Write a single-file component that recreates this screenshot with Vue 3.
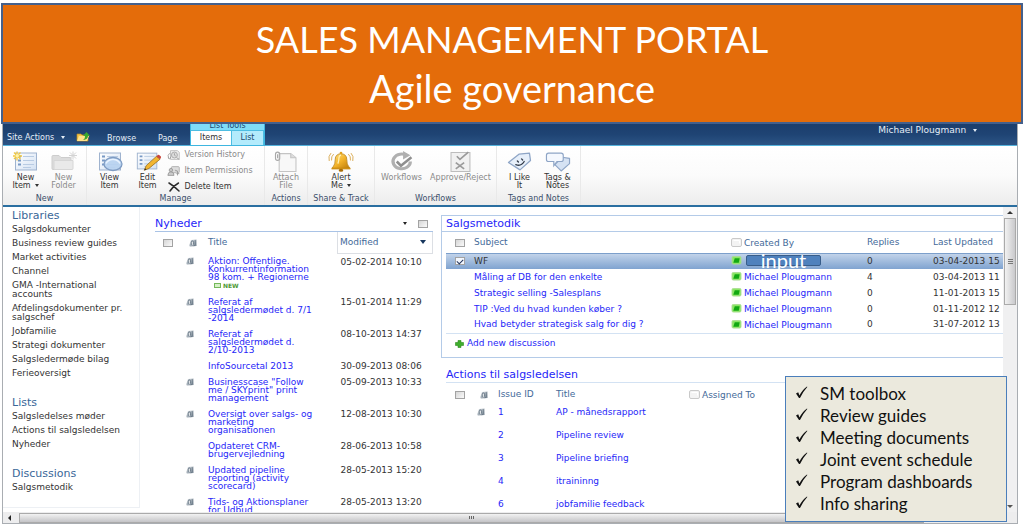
<script setup>
import { ref } from 'vue'

const sections = [
  {
    title: 'Libraries',
    items: ['Salgsdokumenter', 'Business review guides', 'Market activities', 'Channel', 'GMA -International\naccounts', 'Afdelingsdokumenter pr.\nsalgschef', 'Jobfamilie', 'Strategi dokumenter', 'Salgsledermøde bilag', 'Ferieoversigt'],
  },
  { title: 'Lists', items: ['Salgsledelses møder', 'Actions til salgsledelsen', 'Nyheder'] },
  { title: 'Discussions', items: ['Salgsmetodik'] },
]

const groups = [
  {
    name: 'New', cls: 'g-new',
    big: [
      { icon: 'new-item', label: 'New\nItem', caret: true },
      { icon: 'new-folder', label: 'New\nFolder', off: true },
    ],
  },
  {
    name: 'Manage', cls: 'g-manage',
    big: [
      { icon: 'view-item', label: 'View\nItem' },
      { icon: 'edit-item', label: 'Edit\nItem' },
    ],
    small: [
      { icon: 'history', label: 'Version History', off: true },
      { icon: 'permissions', label: 'Item Permissions', off: true },
      { icon: 'delete', label: 'Delete Item' },
    ],
  },
  { name: 'Actions', cls: 'g-actions', big: [{ icon: 'attach', label: 'Attach\nFile', off: true }] },
  { name: 'Share & Track', cls: 'g-share', big: [{ icon: 'bell', label: 'Alert\nMe', caret: true }] },
  {
    name: 'Workflows', cls: 'g-flow',
    big: [
      { icon: 'workflow', label: 'Workflows', off: true },
      { icon: 'approve', label: 'Approve/Reject', off: true },
    ],
  },
  {
    name: 'Tags and Notes', cls: 'g-tags',
    big: [
      { icon: 'like', label: 'I Like\nIt' },
      { icon: 'notes', label: 'Tags &\nNotes' },
    ],
  },
]

const news = [
  { title: 'Aktion: Offentlige.\nKonkurrentinformation\n98 kom. + Regionerne', date: '05-02-2014 10:10', clip: true, fresh: true },
  { title: 'Referat af\nsalgsledermødet d. 7/1\n-2014', date: '15-01-2014 11:29', clip: true },
  { title: 'Referat af\nsalgsledermødet d.\n2/10-2013', date: '08-10-2013 14:37', clip: true },
  { title: 'InfoSourcetal 2013', date: '30-09-2013 08:06' },
  { title: 'Businesscase "Follow\nme / SKYprint" print\nmanagement', date: '05-09-2013 10:33', clip: true },
  { title: 'Oversigt over salgs- og\nmarketing\norganisationen', date: '12-08-2013 10:30', clip: true },
  { title: 'Opdateret CRM-\nbrugervejledning', date: '28-06-2013 10:58' },
  { title: 'Updated pipeline\nreporting (activity\nscorecard)', date: '28-05-2013 15:20', clip: true },
  { title: 'Tids- og Aktionsplaner\nfor Udbud', date: '28-05-2013 13:20', clip: true },
]

const threads = [
  { subject: 'WF', replies: 0, updated: '03-04-2013 15', selected: true },
  { subject: 'Måling af DB for den enkelte', replies: 4, updated: '03-04-2013 11' },
  { subject: 'Strategic selling -Salesplans', replies: 0, updated: '11-01-2013 15' },
  { subject: 'TIP :Ved du hvad kunden køber ?', replies: 0, updated: '01-11-2012 12' },
  { subject: 'Hvad betyder strategisk salg for dig ?', replies: 0, updated: '31-07-2012 13' },
]

const issues = [
  { id: 1, title: 'AP - månedsrapport', clip: true },
  { id: 2, title: 'Pipeline review' },
  { id: 3, title: 'Pipeline briefing' },
  { id: 4, title: 'itraininng' },
  { id: 6, title: 'jobfamilie feedback' },
]

const features = ['SM toolbox', 'Review guides', 'Meeting documents', 'Joint event schedule', 'Program dashboards', 'Info sharing']

const wfChecked = ref(true)
</script>

<template>
  <div class="slide">
    <svg class="defs" aria-hidden="true">
      <defs>
        <linearGradient id="gold" x1="0" y1="0" x2="1" y2="1">
          <stop offset="0" stop-color="#ffe588" /><stop offset="0.5" stop-color="#f3b32a" /><stop offset="1" stop-color="#b97808" />
        </linearGradient>
        <linearGradient id="sheet" x1="0" y1="0" x2="1" y2="1">
          <stop offset="0" stop-color="#ffffff" /><stop offset="1" stop-color="#d3e1f3" />
        </linearGradient>
        <linearGradient id="steel" x1="0" y1="0" x2="1" y2="1">
          <stop offset="0" stop-color="#dfe4e8" /><stop offset="1" stop-color="#71808e" />
        </linearGradient>
        <symbol id="clip" viewBox="0 0 8 8">
          <path d="M2 1L7.500 0.500V7L1 7.500Q0 7.500 0.500 5.500z" fill="url(#steel)" />
          <path d="M2.300 6V3.200Q2.300 1.800 3.400 1.800T4.500 3.200V5.400M6.300 1.200V5.500Q6.300 6.800 4.600 6.800" fill="none" stroke="#62717f" stroke-width="0.700" />
          <path d="M3.400 3V5.800" stroke="#fff" stroke-width="0.700" />
        </symbol>
        <symbol id="list-sheet" viewBox="0 0 26 20">
          <rect x="2.500" y="1.500" width="21" height="17" fill="url(#sheet)" stroke="#9fb3cf" />
          <path d="M5 5h3M5 9h3M5 13h3" stroke="#7899c5" stroke-width="2" />
          <path d="M10 5h11M10 9h11M10 13h11M10 16h8" stroke="#b8cbe3" />
        </symbol>
        <symbol id="new-item" viewBox="0 0 26 20">
          <use href="#list-sheet" />
          <path d="M4 0v9M0 4.500h9M1 1l6.500 6.500M7.500 1L1 7.500" stroke="#f2c73c" stroke-width="1.300" />
          <circle cx="4.200" cy="4.300" r="1.800" fill="#fff3a8" />
        </symbol>
        <symbol id="new-folder" viewBox="0 0 26 20">
          <path d="M1 17V5q0-1 1-1h6l2 2h9q1 0 1 1v10q0 1-1 1H2q-1 0-1-1z" fill="#dcdcdc" stroke="#cdcdcd" />
          <path d="M3 18V9h19v8q0 1-1 1z" fill="#e9e9e9" stroke="#d6d6d6" />
          <path d="M22 0v8M18 4h8M19 1l6 6M25 1l-6 6" stroke="#d4d4d4" stroke-width="1" />
        </symbol>
        <symbol id="view-item" viewBox="0 0 26 20">
          <use href="#list-sheet" />
          <ellipse cx="16" cy="12.500" rx="9" ry="6.500" fill="#b7d1f0" fill-opacity="0.900" stroke="#7f9cc3" stroke-width="1.300" />
          <path d="M9 12q2-4 7-4t7 4" fill="none" stroke="#e9f3ff" stroke-width="1.500" />
        </symbol>
        <symbol id="edit-item" viewBox="0 0 28 21">
          <use href="#list-sheet" width="26" height="20" />
          <path d="M10 20l2-5L23 5l4 3L15 18z" fill="#f2b632" stroke="#94691a" stroke-width="0.800" />
          <path d="M23 5l1.500-1.500q1-0.500 2.500 0.700t1 2L27 8z" fill="#c9463c" />
          <path d="M10 20l0.800-2.300 1.600 1.300z" fill="#222" />
        </symbol>
        <symbol id="history" viewBox="0 0 16 12">
          <path d="M4 1h8l2 2v8H4z" fill="#eee" stroke="#bbb" />
          <circle cx="8.500" cy="6" r="3.400" fill="#ddd" stroke="#a5a5a5" />
          <path d="M2 10q-2-4 1-6M1 9l2 1.500L4.500 8M8.500 4v2.200l1.500 1M11 9l3 2" fill="none" stroke="#9b9b9b" />
        </symbol>
        <symbol id="permissions" viewBox="0 0 16 12">
          <rect x="5" y="1" width="9" height="7" rx="1" fill="#ddd" stroke="#aaa" />
          <circle cx="4.500" cy="5" r="2" fill="#c4c4c4" stroke="#999" />
          <path d="M1 11q0-4 3.500-4T8 11zM9 5l3 1v5M11 9h3" fill="#ccc" stroke="#999" />
        </symbol>
        <symbol id="delete" viewBox="0 0 12 10">
          <path d="M1 1q5 3 10 8M10.500 1Q5 4 2 9" fill="none" stroke="#2b2b2b" stroke-width="1.500" stroke-linecap="round" />
        </symbol>
        <symbol id="attach" viewBox="0 0 24 20">
          <path d="M5.500 2.500h11l5 4v13h-16z" fill="#f8f8f8" stroke="#c4c4c4" />
          <path d="M16.500 2.500v4h5" fill="#ddd" stroke="#c4c4c4" />
          <path d="M2 7V3q0-2 2-2t2 2v4q0 2-2 2t-2-2M4 3v4" fill="none" stroke="#a9a9a9" stroke-width="1.100" />
        </symbol>
        <symbol id="bell" viewBox="0 0 24 20">
          <path d="M4.500 15q2-2 2-7 0-5 5.500-5.500Q17.500 3 17.500 8q0 5 2 7l1 1.500h-17z" fill="url(#gold)" stroke="#b47c12" stroke-width="0.700" />
          <path d="M3 16h18v1.500H3z" fill="#cf8f14" />
          <ellipse cx="12" cy="18.300" rx="2.200" ry="1.500" fill="#a86d08" />
          <circle cx="12" cy="2" r="1.300" fill="#e0a01d" />
          <path d="M5 3Q2.500 5 3 9M2.500 2Q-0.500 5 0.800 9.500M19 3q2.500 2 2 6M21.500 2q3 3 1.700 7.500" fill="none" stroke="#d9a950" stroke-width="0.900" />
          <path d="M9 12q1-2 1-5t2-3" fill="none" stroke="#fff2b8" stroke-width="1.200" />
        </symbol>
        <symbol id="workflow" viewBox="0 0 24 20">
          <path d="M17 4.500A8.300 7 0 1 0 20 10" fill="none" stroke="#b0b0b0" stroke-width="3" />
          <path d="M13 0l7 4-7 4z" fill="#b0b0b0" />
          <path d="M7 10l4 4 10-8" fill="none" stroke="#8f8f8f" stroke-width="2.400" />
        </symbol>
        <symbol id="approve" viewBox="0 0 22 20">
          <path d="M1.500 1.500h18v18h-18z" fill="#f1f1f1" stroke="#bdbdbd" />
          <path d="M7 5l3 3 8-7M6 11l8 6M14 11l-8 6" fill="none" stroke="#9a9a9a" stroke-width="1.600" />
        </symbol>
        <symbol id="like" viewBox="0 0 24 20">
          <path d="M1 11L11 3l10-1 1 7-10 9z" fill="#e6effa" stroke="#8ea5c6" stroke-width="1.200" stroke-linejoin="round" />
          <path d="M8 13q5 2 8-3M9.500 9.500l1 1M13.500 7.500l1 1" fill="none" stroke="#333c4a" stroke-width="1.300" stroke-linecap="round" />
        </symbol>
        <symbol id="notes" viewBox="0 0 24 20">
          <path d="M9 13l7-7 7 1v5l-8 7z" fill="#d5e2f3" stroke="#8ea5c6" stroke-width="1.100" stroke-linejoin="round" />
          <path d="M3 2h12q2 0 2 2v4q0 2-2 2h-4l-3 4v-4H3q-2 0-2-2V4q0-2 2-2z" fill="#f4f8fe" stroke="#8ea5c6" stroke-width="1.100" />
        </symbol>
        <symbol id="person" viewBox="0 0 11 10">
          <rect x="0.500" y="0.500" width="10" height="8.500" rx="1.500" fill="#8be565" stroke="#a9dd92" />
          <path d="M2 7.500L3.500 2.500h5.500L8 7.500z" fill="#12a812" />
        </symbol>
        <symbol id="blank" viewBox="0 0 11 9">
          <rect x="0.500" y="0.500" width="10" height="8" rx="1.500" fill="#f3f3f3" stroke="#c9c9c9" />
          <path d="M2.500 2.500h6v3" fill="none" stroke="#fff" />
        </symbol>
        <symbol id="folder-up" viewBox="0 0 14 10">
          <path d="M1 9V2h4l1 1h6v6z" fill="#f4c64b" stroke="#b98a22" stroke-width="0.700" />
          <path d="M1 9l2-5h10l-2 5z" fill="#ffe28a" />
          <path d="M6 8q3 0 3-4H7l3.500-4L14 4h-2q0 4-6 4z" fill="#39a82f" />
        </symbol>
        <symbol id="tick" viewBox="0 0 13 14">
          <path d="M1 8.500l2.200-1.300 1.300 3.300Q7.500 4.500 12 1.500l0.300 0.400Q8 6.500 5 13H4z" fill="#111" />
        </symbol>
      </defs>
    </svg>

    <header class="banner">
      <h1>SALES MANAGEMENT PORTAL</h1>
      <p>Agile governance</p>
    </header>

    <div class="window">
      <div class="topbar">
        <button class="site" type="button">Site Actions <i class="caret"></i></button>
        <button class="up" type="button" aria-label="Navigate up"><svg><use href="#folder-up" /></svg></button>
        <a class="tab browse" href="#">Browse</a>
        <a class="tab pages" href="#">Page</a>
        <div class="context">
          <span class="context-title">List Tools</span>
          <div class="context-tabs">
            <a class="on" href="#">Items</a>
            <a href="#">List</a>
          </div>
        </div>
        <button class="user" type="button">Michael Plougmann <i class="caret"></i></button>
      </div>

      <div class="ribbon">
        <section v-for="g in groups" :key="g.name" class="group" :class="g.cls">
          <div class="tools">
            <button v-for="b in g.big" :key="b.icon" type="button" class="big" :class="{ off: b.off }">
              <svg><use :href="'#' + b.icon" /></svg>
              <span>{{ b.label }}<i v-if="b.caret" class="caret"></i></span>
            </button>
            <div v-if="g.small" class="stack">
              <button v-for="b in g.small" :key="b.icon" type="button" class="small" :class="{ off: b.off }">
                <svg><use :href="'#' + b.icon" /></svg>{{ b.label }}
              </button>
            </div>
          </div>
          <h2>{{ g.name }}</h2>
        </section>
      </div>

      <div class="body">
        <div class="content">
          <nav class="side">
            <template v-for="s in sections" :key="s.title">
              <h3>{{ s.title }}</h3>
              <a v-for="i in s.items" :key="i" href="#">{{ i }}</a>
            </template>
          </nav>

          <section class="news">
            <div class="part-title">
              <h3>Nyheder</h3>
              <i class="caret dark"></i>
              <input type="checkbox" aria-label="Select Nyheder">
            </div>
            <table>
              <colgroup><col class="n-check"><col class="n-clip"><col><col class="n-date"></colgroup>
              <thead>
                <tr>
                  <th><input type="checkbox" aria-label="Select all news"></th>
                  <th><svg class="clip"><use href="#clip" /></svg></th>
                  <th>Title</th>
                  <th class="sorted"><span>Modified</span><i class="caret dark big-caret"></i></th>
                </tr>
              </thead>
              <tbody>
                <tr v-for="n in news" :key="n.title">
                  <td></td>
                  <td><svg v-if="n.clip" class="clip row-clip"><use href="#clip" /></svg></td>
                  <td><a href="#">{{ n.title }}</a><span v-if="n.fresh" class="fresh"><i></i>NEW</span></td>
                  <td class="date">{{ n.date }}</td>
                </tr>
              </tbody>
            </table>
          </section>

          <div class="right">
            <section class="threads">
              <h3>Salgsmetodik</h3>
              <table>
                <colgroup><col class="t-check"><col class="t-subject"><col class="t-by"><col class="t-replies"><col></colgroup>
                <thead>
                  <tr>
                    <th><input type="checkbox" aria-label="Select all discussions"></th>
                    <th>Subject</th>
                    <th><svg class="who"><use href="#blank" /></svg>Created By</th>
                    <th>Replies</th>
                    <th>Last Updated</th>
                  </tr>
                </thead>
                <tbody>
                  <tr v-for="t in threads" :key="t.subject" :class="{ selected: t.selected }">
                    <td><input v-if="t.selected" v-model="wfChecked" type="checkbox" aria-label="Select WF"></td>
                    <td><a href="#">{{ t.subject }}</a></td>
                    <td class="by">
                      <svg class="who"><use href="#person" /></svg><span v-if="t.selected" class="mask">input</span><a v-else href="#">Michael Plougmann</a>
                    </td>
                    <td>{{ t.replies }}</td>
                    <td>{{ t.updated }}</td>
                  </tr>
                </tbody>
              </table>
              <a class="add" href="#"><svg viewBox="0 0 9 8"><path d="M3 0.500h3v2h2.500v3H6v2H3v-2H0.500v-3H3z" fill="#3fae2c" stroke="#2b8a1d" stroke-width="0.600" /></svg>Add new discussion</a>
            </section>

            <section class="issues">
              <h3>Actions til salgsledelsen</h3>
              <table>
                <colgroup><col class="i-check"><col class="i-clip"><col class="i-id"><col class="i-title"><col></colgroup>
                <thead>
                  <tr>
                    <th><input type="checkbox" aria-label="Select all actions"></th>
                    <th><svg class="clip"><use href="#clip" /></svg></th>
                    <th>Issue ID</th>
                    <th>Title</th>
                    <th><svg class="who"><use href="#blank" /></svg>Assigned To</th>
                  </tr>
                </thead>
                <tbody>
                  <tr v-for="i in issues" :key="i.id">
                    <td></td>
                    <td><svg v-if="i.clip" class="clip row-clip"><use href="#clip" /></svg></td>
                    <td><a href="#">{{ i.id }}</a></td>
                    <td><a href="#">{{ i.title }}</a></td>
                    <td></td>
                  </tr>
                </tbody>
              </table>
            </section>
          </div>
        </div>
        <div class="vbar">
          <i class="arrow-up"></i>
          <div class="thumb"><i></i><i></i><i></i></div>
          <i class="arrow-down"></i>
        </div>
      </div>
      <div class="hbar">
        <i class="arrow-left"></i>
        <div class="thumb"><i></i><i></i><i></i></div>
        <span class="rest"></span>
      </div>
    </div>

    <aside class="callout">
      <ul>
        <li v-for="f in features" :key="f"><svg><use href="#tick" /></svg>{{ f }}</li>
      </ul>
    </aside>
  </div>
</template>

<style>
html, body { background: #fff; overflow: hidden; }
</style>

<style scoped>
* { box-sizing: border-box; }
.slide { position: relative; height: 100vh; display: flex; flex-direction: column; padding: 3px 1px 2px; overflow: hidden; font: 9px/9px "DejaVu Sans", Verdana, sans-serif; color: #333; }
.defs { position: absolute; width: 0; height: 0; }
h1, h2, h3, p, ul { margin: 0; padding: 0; font-weight: 400; }
button { border: 0; padding: 0; background: none; font: inherit; color: inherit; cursor: pointer; }
a { color: #2626f8; text-decoration: none; }
svg { display: block; flex: none; }

.banner { flex: none; padding: 9px 0 9px; border: 2px solid #44608c; background: #e46c0a; color: #fff; text-align: center; font-family: Lato, Calibri, sans-serif; line-height: 50px; }
.banner h1 { font-size: 36px; line-height: 50px; }
.banner p { font-size: 38px; line-height: 49px; }

.window { flex: 1; min-height: 0; margin: 0 5px 0 1px; display: flex; flex-direction: column; border: 1px solid #a9adb2; border-top: 0; }

.topbar { flex: none; display: flex; height: 22px; align-items: flex-start; background: linear-gradient(#1c3e6c, #1f4474 50%, #2c5485); border-bottom: 1px solid #55b3dc; color: #e4edf7; font-size: 8px; }
.topbar button, .topbar .tab { white-space: nowrap; line-height: 10px; color: #e4edf7; }
.site { margin: 9px 0 0 4px; text-align: left; width: 69px; }
.up { margin-top: 8px; width: 14px; height: 10px; }
.up svg { width: 14px; height: 10px; }
.topbar .tab { margin-top: 10px; }
.topbar .browse { margin-left: 17px; width: 51px; }
.topbar .pages { width: 32px; }
.context { width: 75px; height: 22px; border: 1px solid #3fb6e0; border-top: 0; background: #7fdcf8; overflow: hidden; display: flex; flex-direction: column; }
.context-title { height: 7px; line-height: 3px; text-align: center; color: #234a72; }
.context-tabs { flex: 1; display: flex; }
.context-tabs a { flex: 1; border: 1px solid #4dbde2; border-bottom: 0; border-left: 0; background: #b3ebfc; color: #1d4a70; text-align: center; line-height: 14px; }
.context-tabs a.on { flex: none; width: 41px; background: #fff; color: #333; }
.user { margin: 1px 40px 0 auto; font-size: 9px; }
.caret { display: inline-block; margin-left: 4px; border: 2px solid transparent; border-top: 3px solid currentColor; border-bottom: 0; vertical-align: 1px; }
.caret.dark { color: #222; }
.caret.big-caret { border-width: 4px 3px 0; color: #17365d; }

.ribbon { flex: none; display: flex; height: 61px; border-bottom: 2px solid #2a6ea0; background: linear-gradient(#fff, #fbfbfb 50%, #ececec); font-size: 8px; line-height: 8px; }
.group { display: flex; flex-direction: column; justify-content: space-between; border-right: 1px solid #e9e9e9; padding: 5px 0 1px; }
.g-new { width: 84px; }
.g-manage { width: 178px; }
.g-actions { width: 43px; }
.g-share { width: 67px; }
.g-flow { width: 122px; }
.g-tags { width: 84px; }
.group h2 { font-size: 8px; line-height: 10px; color: #3b4f6b; text-align: center; }
.tools { display: flex; justify-content: center; }
.big { width: 38px; display: flex; flex-direction: column; align-items: center; gap: 2px; white-space: pre; line-height: 8px; color: #333; }
.big svg { width: 26px; height: 21px; }
.off { color: #8a8a8a; }
.g-flow .big:first-child { width: 50px; }
.g-flow .big:last-child { width: 68px; }
.stack { margin-top: -4px; display: flex; flex-direction: column; width: 94px; gap: 1px; }
.small { display: flex; align-items: center; gap: 4px; height: 15px; white-space: nowrap; color: #333; }
.small svg { width: 14px; height: 12px; }
.small.off { color: #8a8a8a; }
.small:last-child svg { height: 10px; }

.body { flex: 1; min-height: 0; display: flex; }
.content { flex: 1; min-width: 0; display: flex; overflow: hidden; background: #fff; }
.side { flex: none; width: 137px; height: 301px; padding-left: 9px; border: 1px solid #edf0f4; border-width: 0 1px 1px 0; }
.side h3 { margin: 16px 0 1px; font-size: 11px; line-height: 17px; color: #3a6798; }
.side h3:first-child { margin-top: 0; }
.side a { display: block; margin-bottom: 5px; white-space: pre; color: #333; }

table { width: 100%; table-layout: fixed; border-collapse: collapse; }
th, td { padding: 0; text-align: left; vertical-align: top; font-weight: 400; white-space: nowrap; }
th { height: 21px; vertical-align: middle; color: #446a99; }
input[type="checkbox"] { appearance: none; display: block; margin: 0; width: 10px; height: 8px; border: 1px solid #a3a3a3; background: linear-gradient(135deg, #d6d6d6, #fafafa); }
input[type="checkbox"]:checked { background: #f4f8ff; }
input[type="checkbox"]:checked::after { content: ""; display: block; width: 5px; height: 3px; margin: 1px; border: solid #23355c; border-width: 0 0 1px 1px; transform: rotate(-45deg); }
.clip { width: 8px; height: 8px; margin-left: 3px; }
.row-clip { margin-left: 0; }
.who { display: inline-block; width: 11px; height: 9px; margin-right: 2px; vertical-align: -1px; }

.news { flex: none; width: 278px; margin: 9px 0 0 15px; }
.part-title { display: flex; align-items: center; height: 16px; border-bottom: 1px solid #a9c3e6; }
.part-title .caret { margin-right: 11px; }
.part-title input { margin-right: 5px; }
.part-title h3 { flex: 1; }
.news h3, .right h3 { font-size: 11px; line-height: 15px; color: #2626f8; }
.n-check { width: 31px; }
.n-clip { width: 22px; }
.n-date { width: 95px; }
.news th:first-child input { margin-left: 8px; }
.news .sorted { border: 1px solid #dcdfe4; border-top: 0; padding-left: 2px; }
.sorted span { display: inline-block; width: 76px; }
.news td { line-height: 8px; padding: 4px 0; }
.news td a { display: block; white-space: pre; }
.news td.date { padding-left: 3px; }
.fresh { display: flex; align-items: center; gap: 2px; height: 9px; margin-left: 6px; font-size: 6px; font-weight: 700; color: #4e9a35; }
.fresh i { width: 7px; height: 5px; border: 1px solid #74b85a; background: #d5f0c6; }

.right { flex: 1; min-width: 0; margin: 8px 0 0 8px; }
.threads { border: 1px solid #b4cbe8; border-right: 0; padding: 0 0 7px 4px; }
.threads h3 { margin-left: -4px; padding-left: 4px; border-bottom: 1px solid #b4cbe8; line-height: 15px; }
.threads table { border-bottom: 1px solid #d3e2f3; }
.threads td { height: 16px; vertical-align: middle; }
.threads td:first-child input, .threads th:first-child input { margin-left: 9px; }
.t-check { width: 28px; }
.t-subject { width: 257px; }
.t-by { width: 136px; }
.t-replies { width: 66px; }
.selected { background: linear-gradient(#c6d6eb, #7fa3d0); box-shadow: inset 0 1px #7c9fcb; }
.selected a { color: #333; }
.by { position: relative; }
.mask { position: absolute; left: 15px; top: 2px; width: 75px; height: 11px; border: 1px solid #385d8a; border-radius: 2px; background: #4f81bd; color: #fff; text-align: center; font: 20px/8px Lato, Calibri, sans-serif; }
.add { display: flex; align-items: center; gap: 3px; margin: 4px 0 0 9px; height: 12px; }
.add svg { width: 9px; height: 8px; }
.issues { padding-left: 5px; margin-top: 9px; }
.issues h3 { border-bottom: 1px solid #d3e2f3; }
.issues th { height: 24px; }
.issues td { height: 23px; padding-top: 1px; }
.issues th input { margin-left: 9px; }
.i-check { width: 31px; }
.i-clip { width: 21px; }
.i-id { width: 58px; }
.i-title { width: 133px; }

.vbar { flex: none; width: 14px; display: flex; flex-direction: column; align-items: center; background: #f0f0f1; }
.arrow-up { margin: 4px 0; border: 3px solid transparent; border-bottom-color: #333; border-top: 0; }
.arrow-down { margin: auto 0 4px; border: 3px solid transparent; border-top-color: #555; border-bottom: 0; }
.vbar .thumb { width: 12px; height: 87px; display: flex; flex-direction: column; align-items: center; justify-content: center; gap: 1px; border: 1px solid #aaa; background: linear-gradient(90deg, #f2f2f2, #c9c9cc); }
.vbar .thumb i { width: 5px; height: 1px; background: #777; }
.hbar { flex: none; height: 11px; display: flex; align-items: center; background: #ededee; }
.arrow-left { margin: 0 8px 0 5px; border: 3px solid transparent; border-right-color: #222; border-left: 0; }
.hbar .thumb { flex: 1; height: 10px; display: flex; align-items: center; justify-content: center; gap: 1px; border: 1px solid #aaa; background: linear-gradient(#f2f2f2, #c4c4c7); }
.hbar .thumb i { width: 1px; height: 3px; background: #666; }
.rest { width: 93px; }

/* Feature list floating above the portal window */
.callout { position: absolute; right: 17px; bottom: 4px; width: 222px; padding: 6px 0 6px 9px; border: 1px solid #4a7ebb; background: #ebe9dd; color: #111; }
.callout li { display: flex; font: 17px/22px Lato, Calibri, sans-serif; white-space: nowrap; }
.callout svg { width: 13px; height: 14px; margin: 2px 12px 0 0; }
</style>
